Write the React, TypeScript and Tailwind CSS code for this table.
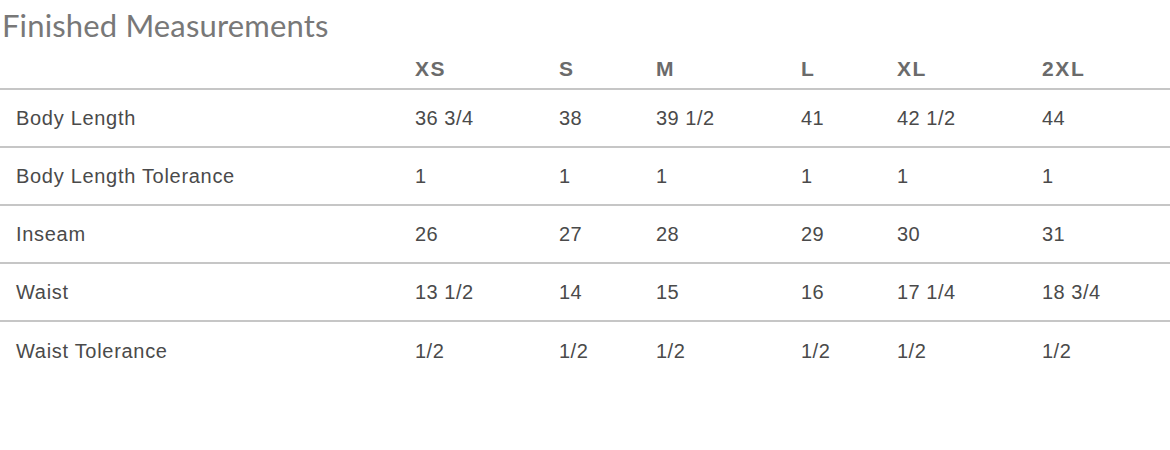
const sizes = ['XS', 'S', 'M', 'L', 'XL', '2XL']

const rows: { label: string; values: string[] }[] = [
  { label: 'Body Length', values: ['36 3/4', '38', '39 1/2', '41', '42 1/2', '44'] },
  { label: 'Body Length Tolerance', values: ['1', '1', '1', '1', '1', '1'] },
  { label: 'Inseam', values: ['26', '27', '28', '29', '30', '31'] },
  { label: 'Waist', values: ['13 1/2', '14', '15', '16', '17 1/4', '18 3/4'] },
  { label: 'Waist Tolerance', values: ['1/2', '1/2', '1/2', '1/2', '1/2', '1/2'] },
]

const cols = 'grid grid-cols-[415px_144px_97px_145px_96px_145px_1fr]'

export default function App() {
  return (
    <div className="w-[1170px] h-[450px] bg-white font-[family-name:'Liberation_Sans',Arial,sans-serif]">
      <h2 className="h-[50px] pl-[2px] leading-[50px] text-[31px] tracking-[0.15px] text-[#787878] font-[family-name:Lato,sans-serif] font-normal">
        Finished Measurements
      </h2>

      <div className={`${cols} h-[40px] items-center border-b-2 border-[#c6c6c6]`}>
        <div />
        {sizes.map((s) => (
          <div key={s} className="text-[21px] font-bold tracking-[1.6px] text-[#6b6b6b]">
            {s}
          </div>
        ))}
      </div>

      {rows.map((r) => (
        <div key={r.label} className={`${cols} h-[58px] items-center border-b-2 border-[#c6c6c6] last:border-b-0`}>
          <div className="pl-4 text-[20px] tracking-[0.7px] text-[#4a4a4a]">{r.label}</div>
          {r.values.map((v, i) => (
            <div key={i} className="text-[20px] tracking-[0.5px] text-[#4a4a4a]">
              {v}
            </div>
          ))}
        </div>
      ))}
    </div>
  )
}
